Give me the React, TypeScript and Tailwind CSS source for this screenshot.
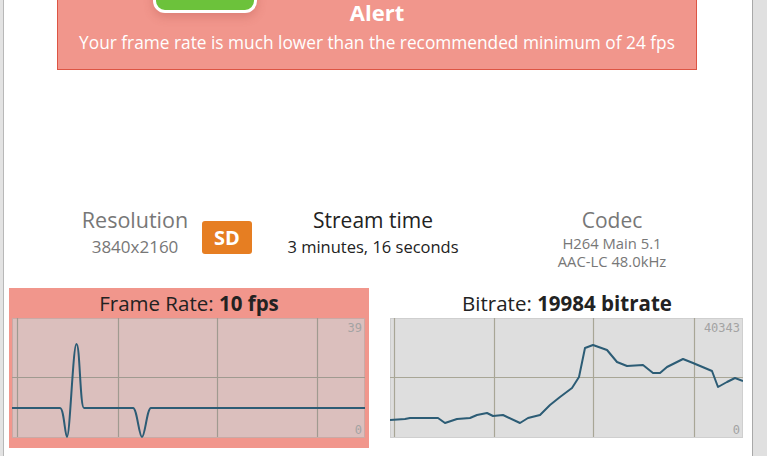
import React from 'react';

const font = { fontFamily: '"Open Sans", "Noto Sans", sans-serif' };

const bitratePoints: [number, number][] = [
  [0, 102], [15, 101], [20, 100], [48, 100], [55, 105], [67, 101], [80, 100], [87, 97], [97, 95],
  [103, 98], [113, 97], [130, 105], [138, 100], [150, 97], [160, 87], [170, 79], [182, 70],
  [189, 59], [195, 30], [203, 27], [217, 32], [227, 44], [237, 48], [253, 47], [263, 55],
  [270, 55], [277, 49], [293, 41], [303, 45], [322, 53], [328, 69], [337, 64], [345, 60], [353, 63],
];

const Grid = ({ xs, stroke }: { xs: number[]; stroke: string }) => (
  <g stroke={stroke} strokeWidth={1.2}>
    {xs.map((x) => (
      <line key={x} x1={x} y1={0} x2={x} y2={119} />
    ))}
    <line x1={0} y1={59.5} x2={353} y2={59.5} />
  </g>
);

const Label = ({ top, bottom }: { top: string; bottom: string }) => (
  <g fill="#a3a3a3" fontSize={12} fontFamily='"DejaVu Sans Mono", monospace' textAnchor="end">
    <text x={350} y={14}>{top}</text>
    <text x={350} y={116}>{bottom}</text>
  </g>
);

const FrameRateChart = () => (
  <svg width={353} height={120} className="block">
    <rect x={0.5} y={0.5} width={352} height={119} fill="#dbbfbd" stroke="#c9aaa6" />
    <Grid xs={[5.5, 106.5, 205.5, 305.5]} stroke="#a09a90" />
    <Label top="39" bottom="0" />
    <path
      d="M0 90 L48 90 C52 90 53 119 55 119 C58 119 61 26 64.5 26 C68 26 68 90 72 90 L121 90 C125 90 127 119 130 119 C133 119 135 90 139 90 L353 90"
      fill="none"
      stroke="#2c5c75"
      strokeWidth={2}
    />
  </svg>
);

const BitrateChart = () => (
  <svg width={353} height={120} className="block">
    <rect x={0.5} y={0.5} width={352} height={119} fill="#dedede" stroke="#cfcfcf" />
    <Grid xs={[4.5, 104.5, 203.5, 304.5]} stroke="#a8a696" />
    <Label top="40343" bottom="0" />
    <polyline
      points={bitratePoints.map((p) => p.join(',')).join(' ')}
      fill="none"
      stroke="#2c5c75"
      strokeWidth={2}
      strokeLinejoin="round"
    />
  </svg>
);

export default function App() {
  return (
    <div className="flex h-[456px] w-full overflow-hidden bg-white" style={font}>
      <div className="w-[4px] shrink-0 border-r border-[#b8b8b8] bg-[#e3e3e3]" />

      <main className="flex w-[748px] shrink-0 flex-col">
        {/* alert */}
        <div className="relative ml-[53px] h-[70px] w-[640px] border-x border-b border-[#dd5544] bg-[#f1968c] text-center text-white">
          <div className="absolute left-[95px] top-[-28px] h-[41px] w-[104px] rounded-xl border-[3px] border-white bg-[#6cc23b] shadow-[0_4px_10px_rgba(160,60,50,0.25)]" />
          <div className="pt-[1px] text-[22px] font-bold leading-[23px]">Alert</div>
          <div className="mt-[7px] text-[17.3px] leading-[24px]">
            Your frame rate is much lower than the recommended minimum of 24 fps
          </div>
        </div>

        {/* stats */}
        <div className="mt-[136px] flex">
          <div className="relative w-[262px] text-center text-[#777]">
            <div className="text-[21.5px] leading-[28px]">Resolution</div>
            <div className="mt-[2px] text-[17px] leading-[22px]">3840x2160</div>
            <div className="absolute left-[198px] top-[15px] flex h-[33px] w-[50px] items-center justify-center rounded-[3px] bg-[#e67e22] text-[20px] font-bold text-white">
              SD
            </div>
          </div>
          <div className="w-[214px] text-center text-[#222]">
            <div className="text-[21px] leading-[28px]">Stream time</div>
            <div className="mt-[2px] text-[16.5px] leading-[22px]">3 minutes, 16 seconds</div>
          </div>
          <div className="w-[264px] text-center text-[#777]">
            <div className="text-[21px] leading-[28px]">Codec</div>
            <div className="text-[14.8px] leading-[18px]">H264 Main 5.1</div>
            <div className="text-[14.8px] leading-[18px]">AAC-LC 48.0kHz</div>
          </div>
        </div>

        {/* charts */}
        <div className="mt-[18px] flex gap-[18px] px-[5px]">
          <div className="w-[360px] bg-[#f1968c] px-[3px] pb-[10px]">
            <div className="h-[30px] text-center text-[20.5px] leading-[31px] text-[#222]">
              Frame Rate: <b className="font-bold">10 fps</b>
            </div>
            <FrameRateChart />
          </div>
          <div className="w-[360px] px-[3px] pb-[10px]">
            <div className="h-[30px] text-center text-[20.5px] leading-[31px] text-[#222]">
              Bitrate: <b className="font-bold">19984 bitrate</b>
            </div>
            <BitrateChart />
          </div>
        </div>
      </main>

      <div className="w-[15px] shrink-0 border-l border-[#a8a8a8] bg-[#e0e0e0]" />
    </div>
  );
}
